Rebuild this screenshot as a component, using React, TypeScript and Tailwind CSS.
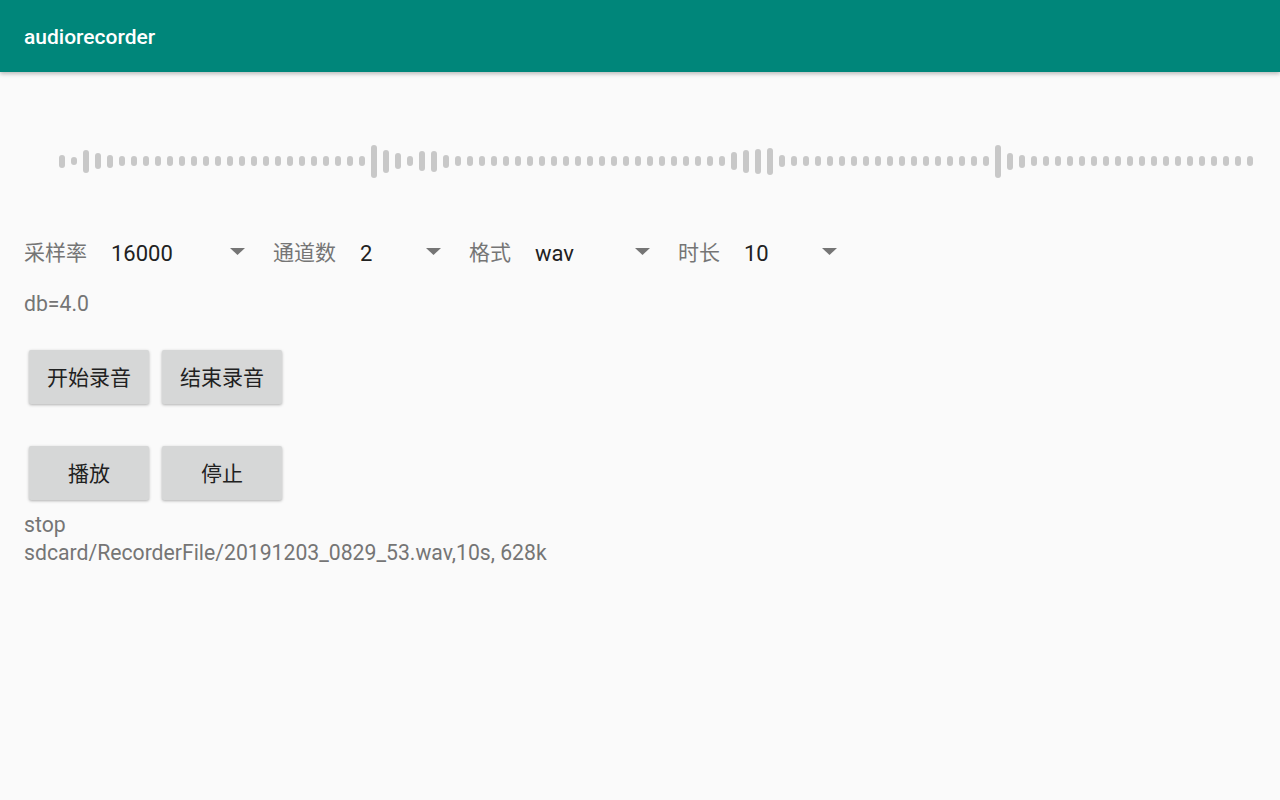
import React from "react";

const font = { fontFamily: "Roboto, 'Noto Sans CJK SC', sans-serif" };

// bar heights of the level meter, 100 bars, default is a small dot
const tall: Record<number, number> = {
  0: 13, 1: 8, 2: 23, 3: 16, 4: 13,
  26: 33, 27: 23, 28: 16, 30: 20, 31: 21, 32: 13,
  56: 18, 57: 23, 58: 25, 59: 27, 60: 12,
  78: 33, 79: 17, 80: 13,
};
const bars = Array.from({ length: 100 }, (_, i) => tall[i] ?? 10);

function Caret() {
  return (
    <svg width="15" height="7" viewBox="0 0 15 7" className="shrink-0 -mt-[3px]">
      <polygon points="0,0 15,0 7.5,7" fill="#757575" />
    </svg>
  );
}

function Spinner({ label, value, width, last }: { label: string; value: string; width: string; last?: boolean }) {
  return (
    <div className={`flex items-center ${last ? "" : "mr-[28px]"}`}>
      <span className="text-[21px] text-[#757575] pt-[2px]">{label}</span>
      <span className={`ml-6 text-[22px] text-[#212121] ${width}`}>{value}</span>
      <Caret />
    </div>
  );
}

function Btn({ children }: { children: React.ReactNode }) {
  return (
    <button className="w-[120px] h-[54px] pt-[3px] rounded-[2px] bg-[#d6d7d7] text-[21px] text-[#212121] shadow-[0_1px_3px_rgba(0,0,0,0.3)]">
      {children}
    </button>
  );
}

export default function App() {
  return (
    <div className="w-[1280px] h-[800px] bg-[#fafafa] overflow-hidden" style={font}>
      {/* Toolbar */}
      <div className="h-[72px] pt-[3px] bg-[#00867a] flex items-center px-6 shadow-[0_2px_4px_rgba(0,0,0,0.25)] relative">
        <span className="text-white text-[21px] font-medium">audiorecorder</span>
      </div>

      {/* Waveform */}
      <div className="mt-[69px] h-[40px] flex items-center gap-[6px] pl-[59px]">
        {bars.map((h, i) => (
          <div key={i} className="w-[6px] rounded-full bg-[#c8c8c8]" style={{ height: h }} />
        ))}
      </div>

      {/* Spinners */}
      <div className="mt-[48px] h-[48px] flex items-center px-6">
        <Spinner label="采样率" value="16000" width="w-[119px]" />
        <Spinner label="通道数" value="2" width="w-[66px]" />
        <Spinner label="格式" value="wav" width="w-[100px]" />
        <Spinner label="时长" value="10" width="w-[78px]" last />
      </div>

      <div className="mt-[13px] px-6 text-[21.2px] leading-[28px] text-[#757575]">db=4.0</div>

      <div className="mt-[32px] pl-[29px] flex gap-[13px]">
        <Btn>开始录音</Btn>
        <Btn>结束录音</Btn>
      </div>

      <div className="mt-[42px] pl-[29px] flex gap-[13px]">
        <Btn>播放</Btn>
        <Btn>停止</Btn>
      </div>

      <div className="mt-[11px] px-6 text-[21.2px] leading-[28px] text-[#757575]">
        <div>stop</div>
        <div>sdcard/RecorderFile/20191203_0829_53.wav,10s, 628k</div>
      </div>
    </div>
  );
}
